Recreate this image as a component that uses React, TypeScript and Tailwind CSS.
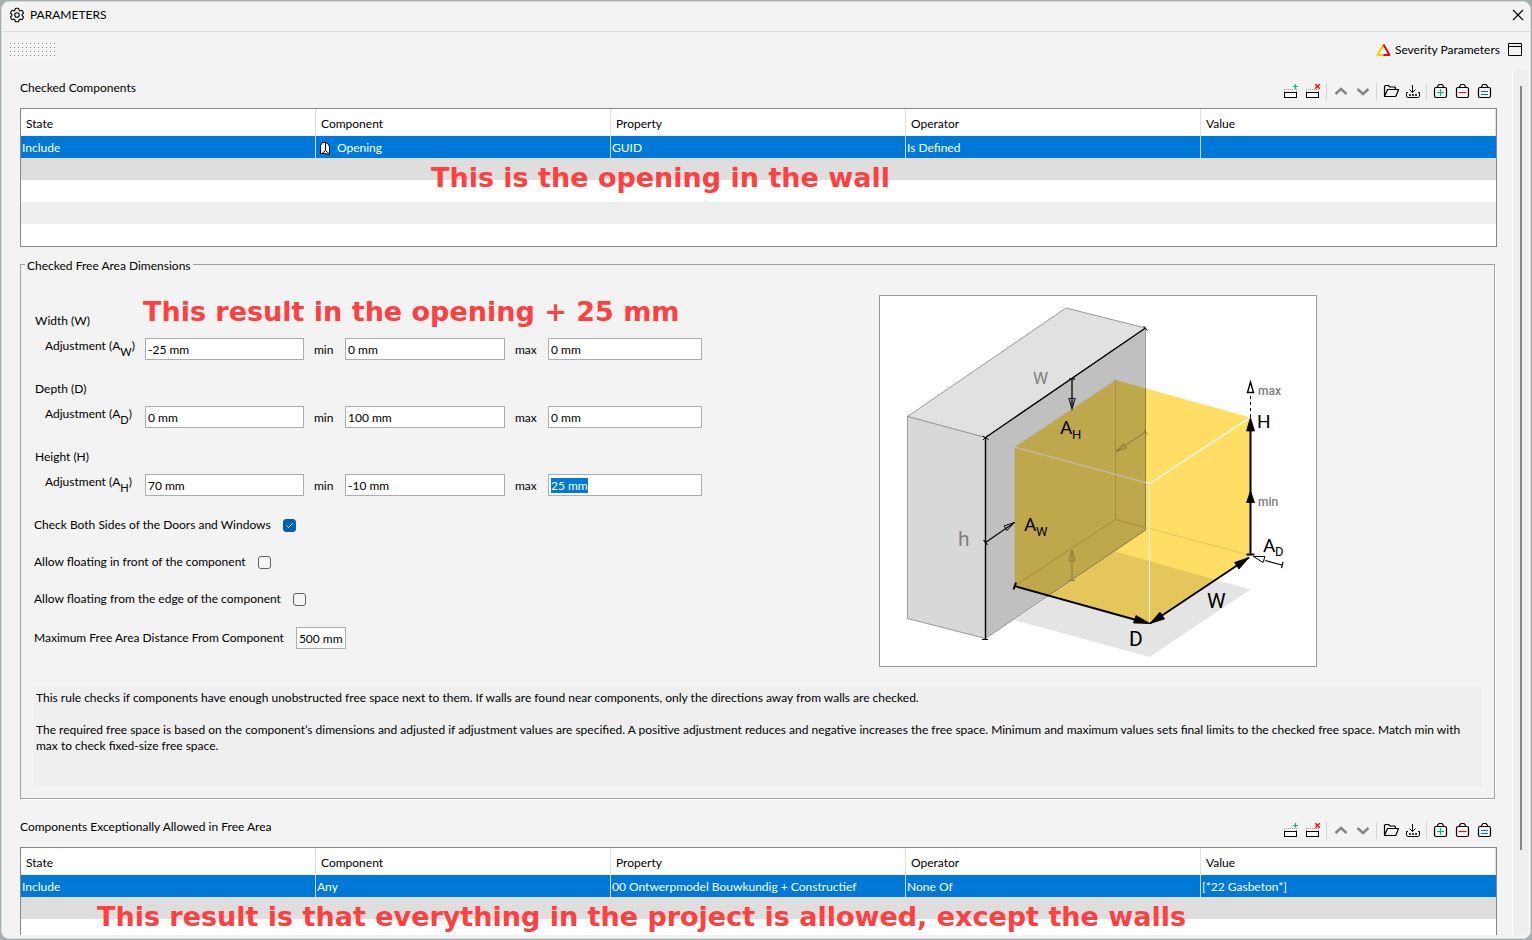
import { useEffect, useRef, type ReactNode } from "react";
import { HiOutlineCog6Tooth } from "react-icons/hi2";

interface RuleRow {
  state: string;
  component: string;
  property: string;
  operator: string;
  value: string;
  hasIcon?: boolean;
}

interface Dimension {
  id: string;
  title: string;
  letter: string;
  adjustment: string;
  min: string;
  max: string;
}

const COLUMNS = ["State", "Component", "Property", "Operator", "Value"];

const CHECKED_ROW: RuleRow = {
  state: "Include",
  component: "Opening",
  property: "GUID",
  operator: "Is Defined",
  value: "",
  hasIcon: true,
};

const ALLOWED_ROW: RuleRow = {
  state: "Include",
  component: "Any",
  property: "00 Ontwerpmodel Bouwkundig + Constructief",
  operator: "None Of",
  value: "[*22 Gasbeton*]",
};

const DIMENSIONS: Dimension[] = [
  { id: "width", title: "Width (W)", letter: "W", adjustment: "-25 mm", min: "0 mm", max: "0 mm" },
  { id: "depth", title: "Depth (D)", letter: "D", adjustment: "0 mm", min: "100 mm", max: "0 mm" },
  { id: "height", title: "Height (H)", letter: "H", adjustment: "70 mm", min: "-10 mm", max: "25 mm" },
];

const CHECKS = [
  { id: "both-sides", label: "Check Both Sides of the Doors and Windows", checked: true },
  { id: "float-front", label: "Allow floating in front of the component", checked: false },
  { id: "float-edge", label: "Allow floating from the edge of the component", checked: false },
];

function ToolButton({ label, children }: { label: string; children: ReactNode }) {
  return (
    <button type="button" aria-label={label} className="h-6 w-[22px]">
      <svg width="22" height="24" viewBox="0 0 22 24" fill="none" stroke="#000">
        {children}
      </svg>
    </button>
  );
}

function Separator() {
  return <span className="ml-0.5 mr-[3px] h-[17px] w-px bg-[#d4d4d4]" />;
}

function RowShape() {
  return (
    <>
      <rect x="4.5" y="13.5" width="12" height="5" fill="#fff" />
      <path d="M4 10.5H17M4.5 12V13M16.5 12V13" stroke="#9a9a9a" strokeDasharray="1 1" />
    </>
  );
}

function BagShape() {
  return (
    <>
      <rect x="4.5" y="8.5" width="12" height="10" rx="1.5" strokeWidth="1.2" />
      <path d="M7.5 8V7.5L9 5.5H12L13.5 7.5V8" strokeWidth="1.2" />
    </>
  );
}

function Toolbar() {
  return (
    <div className="flex items-center self-end pb-[5px] pr-px">
      <ToolButton label="Add row">
        <RowShape />
        <path d="M13 7.5H18M15.5 5V10" stroke="#00c070" strokeWidth="1.2" />
      </ToolButton>
      <ToolButton label="Remove row">
        <RowShape />
        <path d="M13.2 5.2L17.8 9.8M17.8 5.2L13.2 9.8" stroke="#f01010" strokeWidth="1.4" />
      </ToolButton>
      <Separator />
      <ToolButton label="Move up">
        <path d="M5.5 15L11 10L16.5 15" stroke="#858585" strokeWidth="2.5" />
      </ToolButton>
      <ToolButton label="Move down">
        <path d="M5.5 10L11 15L16.5 10" stroke="#858585" strokeWidth="2.5" />
      </ToolButton>
      <Separator />
      <ToolButton label="Open">
        <path
          d="M4.5 17V7.5L5.5 6.5H8.5L10 8H14.5L15.5 9V10.5M4.5 17.5L7.5 10.5H18.5L16 17L15.3 17.5H4.5Z"
          strokeWidth="1.2"
          strokeLinejoin="round"
        />
      </ToolButton>
      <ToolButton label="Import">
        <path d="M10.5 6V13.5M7.5 10.5L10.5 13.5L13.5 10.5" />
        <path d="M6 13.5H4.5V17L5.5 18.5H16.5L17.5 17V13.5H16" />
        <path d="M7 16H9M10 16H12M13 16H15" strokeWidth="1.5" />
      </ToolButton>
      <Separator />
      <ToolButton label="Add selection">
        <BagShape />
        <path d="M7 13.5H14M10.5 10V17" stroke="#00c070" strokeWidth="1.2" />
      </ToolButton>
      <ToolButton label="Remove selection">
        <BagShape />
        <path d="M6.5 13.5H14.5" stroke="#f01010" strokeWidth="1.2" />
      </ToolButton>
      <ToolButton label="Set selection">
        <BagShape />
        <path d="M7 12.5H14M7 15.5H14" stroke="#0078d7" strokeWidth="1.2" />
      </ToolButton>
    </div>
  );
}

function OpeningIcon() {
  return (
    <svg width="12" height="15" viewBox="0 0 12 15" fill="#fff" stroke="#000" strokeLinejoin="round">
      <path d="M1.5 12.5V4.5L3.5 1.5H7L9.5 3.5L10.5 6V13.5L6 12.5Z" />
      <path d="M6.5 2V9.5L10.5 13M6.5 9.5L3 12.5" />
    </svg>
  );
}

function RuleTable({ row }: { row: RuleRow }) {
  return (
    <div className="border border-[#828790] bg-white">
      <table className="w-full table-fixed border-separate border-spacing-0 text-left">
        <thead>
          <tr className="h-[27px]">
            {COLUMNS.map((column) => (
              <th
                key={column}
                className="border-b border-r border-b-[#f2f2f2] border-r-[#e0e0e0] px-[5px] pt-1 font-normal"
              >
                {column}
              </th>
            ))}
          </tr>
        </thead>
        <tbody>
          <tr className="h-[22px] bg-[#0078d7] text-white">
            <td className="border-r border-[#c5dcf0] pl-px pt-0.5">{row.state}</td>
            <td className="border-r border-[#c5dcf0] pl-px pt-0.5">
              {row.hasIcon ? (
                <span className="flex items-center gap-1.5 pl-0.5">
                  <OpeningIcon />
                  {row.component}
                </span>
              ) : (
                row.component
              )}
            </td>
            <td className="border-r border-[#c5dcf0] pl-px pt-0.5">{row.property}</td>
            <td className="border-r border-[#c5dcf0] pl-px pt-0.5">{row.operator}</td>
            <td className="pl-px pt-0.5">{row.value}</td>
          </tr>
          <tr className="h-[22px] bg-[#dedede]">
            <td colSpan={5} />
          </tr>
          <tr className="h-[22px]">
            <td colSpan={5} />
          </tr>
          <tr className="h-[22px] bg-[#eeeeee]">
            <td colSpan={5} />
          </tr>
          <tr className="h-[22px]">
            <td colSpan={5} />
          </tr>
        </tbody>
      </table>
    </div>
  );
}

function RuleSection({ title, row, children }: { title: string; row: RuleRow; children: ReactNode }) {
  return (
    <section>
      <div className="flex h-[39px] items-center justify-between">
        <h2 className="pb-0.5">{title}</h2>
        <Toolbar />
      </div>
      <div className="relative">
        <RuleTable row={row} />
        {children}
      </div>
    </section>
  );
}

function DimensionFields({ dimension, selectMax }: { dimension: Dimension; selectMax: boolean }) {
  const maxRef = useRef<HTMLInputElement>(null);

  useEffect(() => {
    if (selectMax) {
      maxRef.current?.focus();
      maxRef.current?.select();
    }
  }, [selectMax]);

  const { id, title, letter, adjustment, min, max } = dimension;
  const field =
    "h-[22px] border border-[#abadb3] bg-white px-0.5 pt-px outline-none selection:bg-[#0078d7] selection:text-white";

  return (
    <div className="mb-[21px]">
      <h3 className="mb-[9px] pl-px">{title}</h3>
      <div className="flex h-[22px] items-center">
        <label htmlFor={`${id}-adj`} className="w-[111px] self-start pl-[11px]">
          Adjustment (A<sub className="static align-[-6px] text-[11px] leading-none">{letter}</sub>)
        </label>
        <input id={`${id}-adj`} defaultValue={adjustment} className={`${field} w-[159px]`} />
        <label htmlFor={`${id}-min`} className="w-[41px] pl-2.5 pt-0.5">
          min
        </label>
        <input id={`${id}-min`} defaultValue={min} className={`${field} w-[160px]`} />
        <label htmlFor={`${id}-max`} className="w-[43px] pl-2.5 pt-0.5">
          max
        </label>
        <input id={`${id}-max`} ref={maxRef} defaultValue={max} className={`${field} w-[154px]`} />
      </div>
    </div>
  );
}

function FreeAreaDiagram() {
  return (
    <svg width="438" height="372" viewBox="0 0 438 372" fill="none" fontFamily="Roboto, sans-serif">
      <rect x="0.5" y="0.5" width="437" height="371" fill="#fff" stroke="#999" />

      {/* free area with its shadow */}
      <path d="M135.5 152L236.5 85L371.5 122.5V260.5L270.5 328.5L135.5 291Z" fill="#ffde66" />
      <path d="M135.5 325L270.5 362L371.5 294.5L236 256.5Z" fill="#000" fillOpacity="0.105" />

      {/* wall */}
      <g stroke="#999">
        <path d="M28.5 121.5L187 13L266.5 33L106.5 142.5Z" fill="#e1e1e1" />
        <path d="M28.5 121.5L106.5 142.5V343.5L28.5 323.5Z" fill="#d8d8d8" />
        <path d="M106.5 142.5L266.5 33V235L106.5 343.5Z" fill="#c0c0c0" />
      </g>
      <path d="M135.5 152L236.5 85L266.5 93.5V235L168 301L135.5 291Z" fill="#bfa74b" />
      <path d="M266.5 93V235L168 301.5" stroke="#8f7e3f" />
      <path d="M135.5 291V152L236.5 85" stroke="#b8b5a6" />
      <path d="M236.5 85V224.5L135.5 291" stroke="#a28d40" />
      <path d="M236.5 224.5L266.5 232.5" stroke="#a28d40" />
      <path d="M266.5 232.5L371.5 260.5" stroke="#e3c65b" />
      <path d="M135.5 152L266.5 187.5" stroke="#c3bba0" strokeWidth="1.5" />
      <path d="M266.5 187.5L270.5 188.5L371.5 122.5" stroke="#fff7dd" strokeWidth="1.5" />
      <path d="M270.5 188.5V328.5" stroke="#fff7dd" />

      {/* wall measures */}
      <path d="M106.5 344V142.5L266.5 33" stroke="#000" strokeWidth="1.4" />
      <path d="M103 344.5H109M103.5 141L109.5 144.5M104 145L109 140M264.5 31L268.5 35.5" stroke="#000" />
      <path d="M193 84V112M190 84H196" stroke="#1a1a1a" strokeWidth="1.5" />
      <path d="M190 103.5H196L193 114Z" stroke="#1a1a1a" strokeWidth="1.2" />
      <path d="M106.5 247.5L135.5 227.5M104.5 245L108.5 250" stroke="#000" strokeWidth="1.2" />
      <path d="M135.5 227.5L125 231L128 235.5Z" stroke="#000" />
      <g stroke="#8a783a">
        <path d="M193 285.5V255M190 285.5H196M190 266H196L193 255Z" />
        <path d="M266.5 137L237 156.5M264.5 134.5L268.5 139.5M237 156.5L244.5 148.5L247.5 153Z" />
      </g>

      {/* free area measures */}
      <path d="M371.5 122V98" stroke="#000" strokeDasharray="3 3" />
      <path d="M371.5 87L368.5 97.5H374.5Z" fill="#fff" stroke="#000" strokeWidth="1.4" />
      <path d="M371.5 259.5V130M367.5 259.5H375.5" stroke="#000" strokeWidth="2" />
      <g fill="#000" stroke="#000" strokeWidth="0.8">
        <path d="M371.5 122.5L367.5 136H375.5ZM371.5 196L367.5 207.5H375.5Z" />
        <path d="M271 328.5L281 317L285.5 324ZM370 262.5L355.5 267.5L360 274Z" />
        <path d="M271 328.5L254.5 328L257 320.5Z" />
      </g>
      <path d="M271 328.5L370 262.5" stroke="#000" strokeWidth="2" />
      <path d="M135.5 291L268 328M137 287.5L134.5 294.5" stroke="#000" strokeWidth="2" />
      <path d="M403 270L386 265.5M404 267L402.5 273" stroke="#000" strokeWidth="1.2" />
      <path d="M374.5 261.5L386 261.5L384 267.5Z" fill="#fff" stroke="#000" />

      <g fill="#000" fontSize="19">
        <text x="181" y="139">A</text>
        <text x="145" y="236">A</text>
        <text x="384" y="257">A</text>
        <text x="378" y="133">H</text>
      </g>
      <g fill="#000" fontSize="13">
        <text x="193" y="144">H</text>
        <text x="157" y="241">W</text>
        <text x="396" y="261">D</text>
      </g>
      <g fill="#000" fontSize="21">
        <text x="328" y="313">W</text>
        <text x="250" y="351">D</text>
      </g>
      <g fill="#808080">
        <text x="154" y="89" fontSize="17">W</text>
        <text x="79" y="251" fontSize="21">h</text>
        <text x="379" y="100" fontSize="12" fontWeight="500">max</text>
        <text x="379" y="211" fontSize="12" fontWeight="500">min</text>
      </g>
    </svg>
  );
}

function Note({ className, children }: { className: string; children: ReactNode }) {
  return (
    <p
      className={`pointer-events-none absolute whitespace-nowrap font-['DejaVu_Sans'] text-[27px] font-bold leading-6 text-[#ff4040] ${className}`}
    >
      {children}
    </p>
  );
}

function FreeAreaSection() {
  return (
    <fieldset className="relative mr-0.5 mt-2 min-w-0 border border-[#a0a0a0] px-3 pb-[11px] shadow-[1px_1px_0_#fff]">
      <legend className="-ml-2 px-0.5 pt-[3px]">Checked Free Area Dimensions</legend>
      <div className="flex pt-[21px]">
        <div className="w-[680px] shrink-0 pl-px pt-[18px]">
          {DIMENSIONS.map((dimension) => (
            <DimensionFields key={dimension.id} dimension={dimension} selectMax={dimension.id === "height"} />
          ))}
          <div className="flex flex-col gap-[21px]">
            {CHECKS.map((check) => (
              <div key={check.id} className="flex h-4 items-center gap-3">
                <label htmlFor={check.id}>{check.label}</label>
                <span className="relative flex">
                  <input
                    id={check.id}
                    type="checkbox"
                    defaultChecked={check.checked}
                    className="peer size-[13px] appearance-none rounded-[3px] border border-[#626262] bg-[#f5f5f5] checked:border-[#005fb8] checked:bg-[#005fb8]"
                  />
                  <svg
                    className="pointer-events-none absolute inset-0 hidden peer-checked:block"
                    width="13"
                    height="13"
                    viewBox="0 0 13 13"
                    fill="none"
                    stroke="#fff"
                  >
                    <path d="M3.5 6.5L5.5 8.5L9.5 4.5" />
                  </svg>
                </span>
              </div>
            ))}
          </div>
          <div className="mt-5 flex items-center gap-3">
            <label htmlFor="max-distance">Maximum Free Area Distance From Component</label>
            <input
              id="max-distance"
              defaultValue="500 mm"
              className="h-[22px] w-[50px] border border-[#abadb3] bg-white px-0.5 outline-none"
            />
          </div>
        </div>
        <div className="flex flex-1 items-start justify-center">
          <FreeAreaDiagram />
        </div>
      </div>
      <div className="ml-px mt-5 h-[100px] bg-[#efefef] px-0.5 pt-[3px]">
        <p className="mb-4">
          This rule checks if components have enough unobstructed free space next to them. If walls are found near
          components, only the directions away from walls are checked.
        </p>
        <p>
          The required free space is based on the component’s dimensions and adjusted if adjustment values are
          specified. A positive adjustment reduces and negative increases the free space. Minimum and maximum values
          sets final limits to the checked free space. Match min with max to check fixed-size free space.
        </p>
      </div>
      <Note className="left-[122px] top-[26px]">This result in the opening + 25 mm</Note>
    </fieldset>
  );
}

export default function App() {
  return (
    <div className="h-screen overflow-hidden bg-[#a3afaf] p-px font-['Lato','Open_Sans',sans-serif] text-[12px] leading-4 text-black">
      <div className="flex h-full flex-col overflow-hidden rounded-lg border border-[#dcdcdc] bg-[#f3f3f3] pb-[3px]">
        <header className="flex h-[30px] shrink-0 items-center border-b border-[#d9d9d9] pb-[3px] pl-1.5 pr-[5px]">
          <HiOutlineCog6Tooth size={18} />
          <h1 className="ml-1 flex-1">PARAMETERS</h1>
          <button type="button" aria-label="Close">
            <svg width="14" height="14" viewBox="0 0 14 14" stroke="#000" strokeWidth="1.2">
              <path d="M2 2L12 12M12 2L2 12" />
            </svg>
          </button>
        </header>

        <div className="flex h-[37px] shrink-0 items-center justify-between px-2 pb-0.5">
          <svg width="47" height="14" viewBox="0 0 47 14">
            <defs>
              <pattern id="grip" width="4" height="4" patternUnits="userSpaceOnUse">
                <rect width="1" height="1" fill="#8d8d8d" />
                <rect x="1" y="1" width="1" height="1" fill="#fff" />
              </pattern>
            </defs>
            <rect width="47" height="14" fill="url(#grip)" />
          </svg>
          <div className="flex items-center gap-2">
            <button type="button" className="flex items-center gap-1">
              <svg width="15" height="14" viewBox="0 0 15 14" fill="none" strokeWidth="2" strokeLinejoin="round">
                <path d="M7.5 1.5L1.5 12H7.5" stroke="#ffc800" />
                <path d="M7.5 1.5L13.5 12H7.5" stroke="#e00b0b" />
              </svg>
              Severity Parameters
            </button>
            <button type="button" aria-label="Toggle panel">
              <svg width="14" height="13" viewBox="0 0 14 13" fill="none" stroke="#000">
                <path d="M0.5 0.5H13.5V12.5H0.5ZM0.5 3.5H13.5" />
              </svg>
            </button>
          </div>
        </div>

        <div className="flex min-h-0 flex-1">
          <main className="min-w-0 flex-1 overflow-hidden pl-[18px] pr-[15px]">
            <RuleSection title="Checked Components" row={CHECKED_ROW}>
              <Note className="left-[411px] top-[58px]">This is the opening in the wall</Note>
            </RuleSection>
            <FreeAreaSection />
            <div className="mt-[9px]">
              <RuleSection title="Components Exceptionally Allowed in Free Area" row={ALLOWED_ROW}>
                <Note className="left-[77px] top-[58px]">
                  This result is that everything in the project is allowed, except the walls
                </Note>
              </RuleSection>
            </div>
          </main>
          <div className="mr-0.5 flex w-4 justify-center border-l border-white bg-[#efefef] pt-[17px]">
            <div className="h-[90%] w-0.5 bg-[#858585]" />
          </div>
        </div>
      </div>
    </div>
  );
}
